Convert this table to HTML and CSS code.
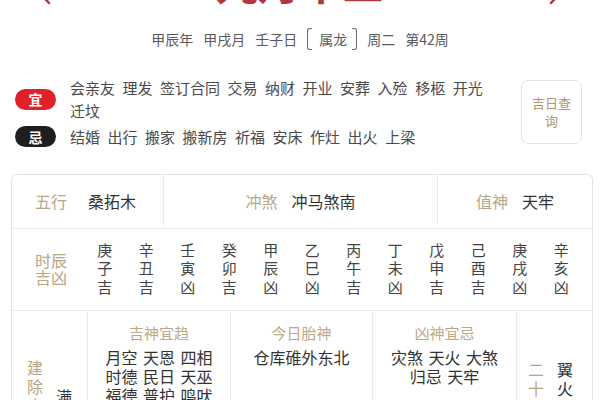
FILE: index.html
```html
<!DOCTYPE html>
<html lang="zh-CN">
<head>
<meta charset="utf-8">
<title>黄历</title>
<link rel="stylesheet" href="styles.css">
</head>
<body>
<header class="hero">
  <div class="title-row">
    <svg class="chev" viewBox="0 0 12 20" aria-hidden="true"><path d="M10 2 L2.5 10 L10 18" /></svg>
    <h1 class="title">九月十三</h1>
    <svg class="chev" viewBox="0 0 12 20" aria-hidden="true"><path d="M2 2 L9.5 10 L2 18" /></svg>
  </div>
  <div class="ganzhi">
    <span>甲辰年</span><span>甲戌月</span><span>壬子日</span><span class="zodiac">属龙</span><span>周二</span><span>第42周</span>
  </div>
</header>

<section class="yiji">
  <div class="yiji-list">
    <div class="yiji-row">
      <span class="badge badge-yi">宜</span>
      <ul class="acts">
        <li>会亲友</li><li>理发</li><li>签订合同</li><li>交易</li><li>纳财</li><li>开业</li><li>安葬</li><li>入殓</li><li>移柩</li><li>开光</li><li>迁坟</li>
      </ul>
    </div>
    <div class="yiji-row">
      <span class="badge badge-ji">忌</span>
      <ul class="acts">
        <li>结婚</li><li>出行</li><li>搬家</li><li>搬新房</li><li>祈福</li><li>安床</li><li>作灶</li><li>出火</li><li>上梁</li>
      </ul>
    </div>
  </div>
  <a class="lucky">吉日查询</a>
</section>

<section class="almanac">
  <div class="row row-info">
    <div class="cell info-cell info-first"><span class="label lbl-fixed">五行</span><span class="value">桑拓木</span></div>
    <div class="cell info-cell"><span class="label">冲煞</span><span class="value">冲马煞南</span></div>
    <div class="cell info-cell"><span class="label">值神</span><span class="value">天牢</span></div>
  </div>
  <div class="row row-hours">
    <div class="hours-label-cell"><span class="hours-label">时辰吉凶</span></div>
    <div class="hour"><span>庚子吉</span></div>
    <div class="hour"><span>辛丑吉</span></div>
    <div class="hour"><span>壬寅凶</span></div>
    <div class="hour"><span>癸卯吉</span></div>
    <div class="hour"><span>甲辰凶</span></div>
    <div class="hour"><span>乙巳凶</span></div>
    <div class="hour"><span>丙午吉</span></div>
    <div class="hour"><span>丁未凶</span></div>
    <div class="hour"><span>戊申吉</span></div>
    <div class="hour"><span>己酉吉</span></div>
    <div class="hour"><span>庚戌凶</span></div>
    <div class="hour"><span>辛亥凶</span></div>
  </div>
  <div class="row row-gods">
    <div class="cell vert-cell vert-first">
      <span class="vert label">建除十二神</span>
      <span class="vert value man">满日</span>
    </div>
    <div class="cell god-cell">
      <div class="god-title">吉神宜趋</div>
      <div class="god-list"><p>月空 天恩 四相</p><p>时德 民日 天巫</p><p>福德 普护 鸣吠</p></div>
    </div>
    <div class="cell god-cell">
      <div class="god-title">今日胎神</div>
      <div class="god-list"><p>仓库碓外东北</p></div>
    </div>
    <div class="cell god-cell">
      <div class="god-title">凶神宜忌</div>
      <div class="god-list"><p>灾煞 天火 大煞</p><p>归忌 天牢</p></div>
    </div>
    <div class="cell vert-cell vert-last">
      <span class="vert label">二十八宿</span>
      <span class="vert value">翼火蛇</span>
    </div>
  </div>
</section>
</body>
</html>
```

FILE: styles.css
```css
* { box-sizing: border-box; margin: 0; padding: 0; }
html, body { overflow: hidden; }
body {
  width: 600px;
  height: 400px;
  background: #fff;
  font-family: "Noto Sans CJK SC", "Noto Sans", sans-serif;
  color: #333;
}

/* header */
.title-row {
  display: flex;
  justify-content: space-between;
  align-items: flex-end;
  height: 42px;
  margin-top: -39px;
  padding: 0 39px;
}
.title {
  font-size: 42px;
  line-height: 42px;
  font-weight: 700;
  color: #b0383f;
}
.chev {
  width: 12px;
  height: 20px;
  margin-bottom: -2px;
  fill: none;
  stroke: #b0383f;
  stroke-width: 2.5;
  stroke-linecap: round;
  stroke-linejoin: round;
}
.ganzhi {
  display: flex;
  justify-content: center;
  align-items: center;
  gap: 10px;
  margin-top: 25px;
  font-size: 14px;
  line-height: 20px;
  color: #5a5a5a;
}
.zodiac { display: inline-flex; align-items: center; }
.zodiac::before,
.zodiac::after {
  content: "";
  width: 4px;
  height: 20px;
  border: 1.5px solid #6a6a6a;
}
.zodiac::before { border-right: none; border-radius: 3px 0 0 3px; margin-right: 7px; }
.zodiac::after { border-left: none; border-radius: 0 3px 3px 0; margin-left: 5px; }

/* 宜 忌 */
.yiji {
  display: flex;
  align-items: center;
  margin-top: 26px;
  padding: 0 18px 0 15px;
}
.yiji-list {
  flex: 1;
  display: flex;
  flex-direction: column;
  gap: 3px;
}
.yiji-row { display: flex; align-items: center; }
.badge {
  flex: none;
  width: 41px;
  height: 21px;
  border-radius: 11px;
  margin-right: 14px;
  display: flex;
  align-items: center;
  justify-content: center;
  color: #fff;
  font-size: 14px;
  font-weight: 700;
}
.badge-yi { background: #de2229; }
.badge-ji { background: #1e1e1e; }
.acts {
  flex: 1;
  list-style: none;
  display: flex;
  flex-wrap: wrap;
  column-gap: 7.5px;
  font-size: 15px;
  line-height: 23px;
  color: #4a4a4a;
}
.lucky {
  flex: none;
  width: 61px;
  height: 64px;
  margin-left: 16px;
  padding: 0 10px;
  display: flex;
  align-items: center;
  justify-content: center;
  text-align: center;
  border: 1px solid #e3e3e3;
  border-radius: 7px;
  font-size: 13px;
  line-height: 18px;
  color: #b39570;
}

/* table */
.almanac {
  margin: 26px 7px 0 11px;
  border: 1px solid #e4e4e4;
  border-bottom: none;
  border-radius: 6px 6px 0 0;
}
.row {
  display: grid;
  border-bottom: 1px solid #ebebeb;
}
.cell + .cell { border-left: 1px solid #ebebeb; }
.label { color: #b8a689; }
.value { color: #333; }

.row-info {
  grid-template-columns: 151px 274px 1fr;
  height: 54px;
  padding-bottom: 2px;
}
.info-cell {
  display: flex;
  align-items: center;
  justify-content: center;
  gap: 14px;
  font-size: 16px;
}
.info-first { justify-content: flex-start; padding-left: 23px; gap: 0; }
.lbl-fixed { width: 53px; }

.row-hours {
  grid-template-columns: 72px repeat(12, 41.5px) 1fr;
  height: 82px;
  padding-bottom: 2px;
}
.hours-label-cell {
  display: flex;
  align-items: center;
  padding-left: 23px;
}
.hours-label {
  width: 34px;
  font-size: 16px;
  line-height: 17px;
  color: #b8a689;
}
.hour {
  display: flex;
  align-items: center;
  justify-content: center;
}
.hour span {
  width: 15px;
  font-size: 15px;
  line-height: 18.5px;
  color: #444;
}

.row-gods {
  grid-template-columns: 75px 143px 142px 144px 1fr;
  border-bottom: none;
  min-height: 200px;
}
.god-cell { padding-top: 12px; text-align: center; }
.god-title { font-size: 15px; line-height: 20px; color: #bea886; }
.god-list {
  margin-top: 5px;
  font-size: 16px;
  line-height: 19px;
  color: #333;
  word-spacing: 2px;
}
.vert-cell {
  display: flex;
  justify-content: center;
  align-items: flex-start;
  gap: 13px;
}
.vert-first { padding-top: 47px; }
.vert-last { padding-top: 49px; padding-right: 8px; }
.vert {
  width: 16px;
  font-size: 16px;
  line-height: 19px;
}
.man { margin-top: 29px; }
```
